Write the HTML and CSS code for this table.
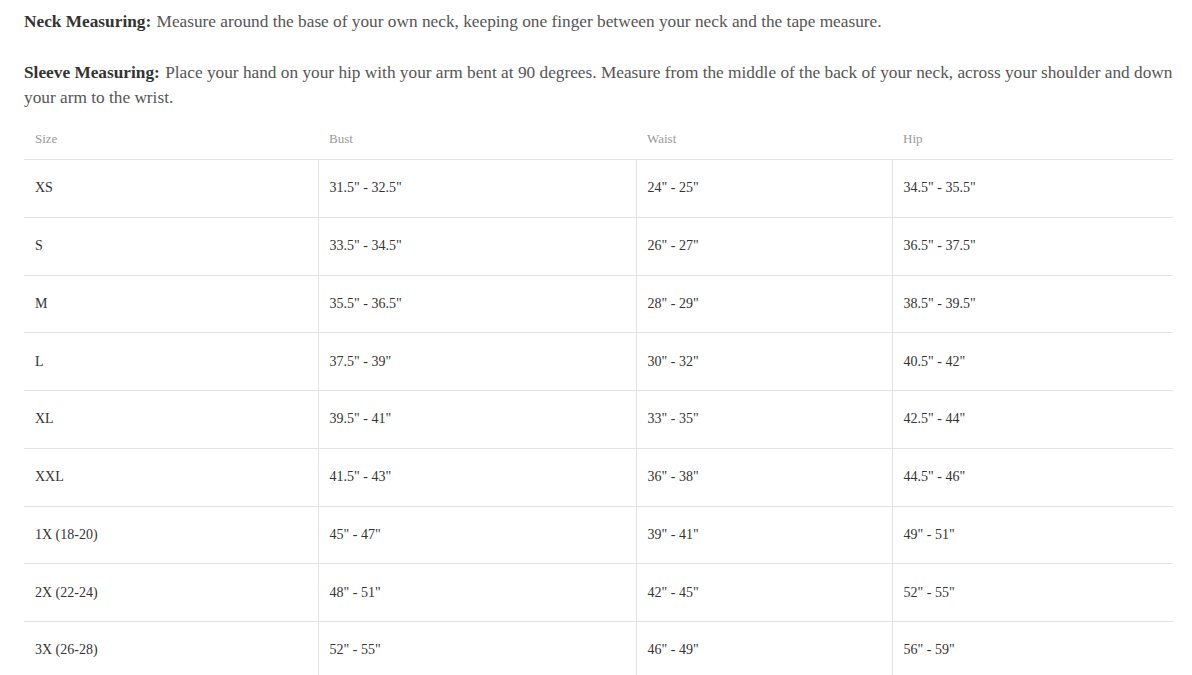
FILE: index.html
```html
<!DOCTYPE html>
<html>
<head>
<meta charset="utf-8">
<link rel="stylesheet" href="styles.css">
</head>
<body>
<div class="wrap">
  <p class="note"><strong>Neck Measuring:</strong> Measure around the base of your own neck, keeping one finger between your neck and the tape measure.</p>
  <p class="note"><strong>Sleeve Measuring:</strong> Place your hand on your hip with your arm bent at 90 degrees. Measure from the middle of the back of your neck, across your shoulder and down your arm to the wrist.</p>
  <table class="sizes">
    <colgroup>
      <col class="c1"><col class="c2"><col class="c3"><col class="c4">
    </colgroup>
    <thead>
      <tr><th>Size</th><th>Bust</th><th>Waist</th><th>Hip</th></tr>
    </thead>
    <tbody>
      <tr><td>XS</td><td>31.5" - 32.5"</td><td>24" - 25"</td><td>34.5" - 35.5"</td></tr>
      <tr><td>S</td><td>33.5" - 34.5"</td><td>26" - 27"</td><td>36.5" - 37.5"</td></tr>
      <tr><td>M</td><td>35.5" - 36.5"</td><td>28" - 29"</td><td>38.5" - 39.5"</td></tr>
      <tr><td>L</td><td>37.5" - 39"</td><td>30" - 32"</td><td>40.5" - 42"</td></tr>
      <tr><td>XL</td><td>39.5" - 41"</td><td>33" - 35"</td><td>42.5" - 44"</td></tr>
      <tr><td>XXL</td><td>41.5" - 43"</td><td>36" - 38"</td><td>44.5" - 46"</td></tr>
      <tr><td>1X (18-20)</td><td>45" - 47"</td><td>39" - 41"</td><td>49" - 51"</td></tr>
      <tr><td>2X (22-24)</td><td>48" - 51"</td><td>42" - 45"</td><td>52" - 55"</td></tr>
      <tr><td>3X (26-28)</td><td>52" - 55"</td><td>46" - 49"</td><td>56" - 59"</td></tr>
    </tbody>
  </table>
</div>
</body>
</html>
```
FILE: styles.css
```css
html, body {
  margin: 0;
  padding: 0;
  background: #fff;
}
body {
  font-family: "Liberation Serif", "DejaVu Serif", serif;
  color: #555;
}
.wrap {
  width: 1149px;
  margin-left: 24px;
  padding-top: 9px;
}
.note {
  margin: 0 0 26px 0;
  font-size: 17.3px;
  line-height: 25px;
  color: #555;
}
.note:last-of-type {
  margin-bottom: 8px;
}
.note strong {
  color: #333;
  font-weight: bold;
  margin-right: 1px;
}
.sizes {
  width: 1149px;
  border-collapse: collapse;
  table-layout: fixed;
}
.c1 { width: 294px; }
.c2 { width: 318px; }
.c3 { width: 256px; }
.c4 { width: 281px; }
.sizes th {
  text-align: left;
  font-weight: normal;
  font-size: 13px;
  color: #9a9a9a;
  height: 41px;
  padding: 0 11px;
  vertical-align: middle;
  border-bottom: 1px solid #e3e3e3;
}
.sizes td {
  font-size: 14px;
  color: #333;
  height: 56.75px;
  padding: 0 11px;
  vertical-align: middle;
  border-top: 1px solid #e3e3e3;
  border-left: 1px solid #e3e3e3;
}
.sizes td:first-child {
  border-left: none;
}
```
